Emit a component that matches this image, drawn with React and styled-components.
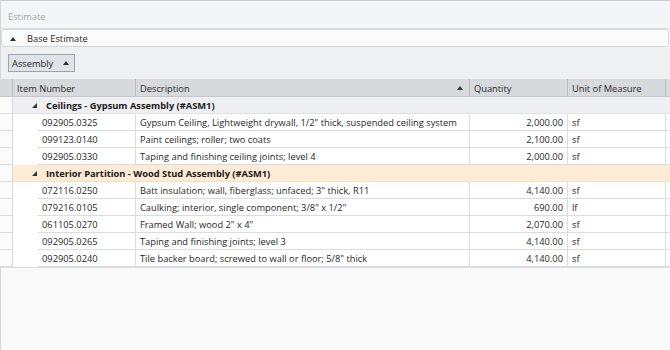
import React from "react";
import styled, { createGlobalStyle } from "styled-components";

const Global = createGlobalStyle`
  html, body { margin: 0; padding: 0; }
  body {
    width: 670px;
    height: 350px;
    overflow: hidden;
    background: #f9f9f9;
    font-family: "Open Sans", "Noto Sans", sans-serif;
    font-size: 9.3px;
    color: #1f1f1f;
  }
`;

const COLS = "13px 25px 98px 334px 98px 98px 1fr";

const Page = styled.div`
  display: flex;
  flex-direction: column;
  width: 670px;
  height: 350px;
  border-top: 1px solid #c9ccd0;
  border-left: 1px solid #d4d7da;
  box-sizing: border-box;
`;

const TitleBar = styled.div`
  height: 27px;
  flex: none;
  display: flex;
  align-items: center;
  padding: 3px 0 0 7px;
  box-sizing: border-box;
  height: 28px;
  background: #f4f5f6;
  color: #a4a7ab;
  border-bottom: 1px solid #dcdfe2;
`;

const SectionBar = styled.div`
  height: 15px;
  flex: none;
  display: flex;
  align-items: center;
  gap: 11px;
  padding: 1px 0 0 8px;
  background: #fbfbfb;
  border: 1px solid #d4d7da;
  border-radius: 3px;
  margin-right: 1px;
  color: #1f1f1f;
`;

const Caret = styled.span`
  display: inline-block;
  width: 0;
  height: 0;
  border-left: 3px solid transparent;
  border-right: 3px solid transparent;
  border-bottom: 4px solid #333;
`;

const CornerCaret = styled.span`
  display: inline-block;
  width: 0;
  height: 0;
  border-left: 5px solid transparent;
  border-bottom: 5px solid #333;
`;

const GroupPanel = styled.div`
  height: 32px;
  flex: none;
  display: flex;
  align-items: center;
  padding-left: 7px;
  background: #eef0f2;
`;

const GroupChip = styled.div`
  height: 18px;
  display: flex;
  align-items: center;
  gap: 10px;
  padding: 0 5px 0 3px;
  background: #dfe2e6;
  border: 1px solid #9fa4aa;
  box-sizing: border-box;
  color: #1f1f1f;
`;

const Grid = styled.div`
  display: grid;
  grid-template-columns: ${COLS};
  margin-left: -1px;
`;

const HeaderCell = styled.div`
  height: 18px;
  display: flex;
  align-items: center;
  justify-content: space-between;
  padding: 1px 6px 0 4px;
  background: #d7dadd;
  border-right: 1px solid #b9bdc2;
  border-bottom: 1px solid #c4c8cc;
  box-sizing: border-box;
  color: #2a2a2a;
  grid-column: ${(p) => p.$span || "auto"};
  &:last-child { border-right: none; }
`;

const Indicator = styled.div`
  height: 17px;
  background: #fbfbfb;
  border-right: 1px solid #d4d8dc;
  border-bottom: 1px solid #d9dde1;
  box-sizing: border-box;
`;

const GroupCell = styled.div`
  grid-column: 2 / -1;
  height: 17px;
  display: flex;
  align-items: center;
  gap: 9px;
  padding: 1px 0 0 19px;
  font-weight: 700;
  background: ${(p) => (p.$warm ? "#fdebd5" : "#edeff1")};
  border-bottom: 1px solid ${(p) => (p.$warm ? "#f6dfc3" : "#e0e3e6")};
  box-sizing: border-box;
  color: #1a1a1a;
`;

const Spacer = styled.div`
  height: 17px;
  background: #ffffff;
`;

const Cell = styled.div`
  height: 17px;
  display: flex;
  align-items: center;
  justify-content: ${(p) => (p.$right ? "flex-end" : "flex-start")};
  padding: 1px 4px 0;
  background: #ffffff;
  border-right: 1px solid #d9dde1;
  border-bottom: 1px solid #d9dde1;
  box-sizing: border-box;
  white-space: nowrap;
  overflow: hidden;
  color: #1f1f1f;
`;

const Tail = styled.div`
  height: 17px;
  background: #ffffff;
  border-bottom: 1px solid #d9dde1;
  box-sizing: border-box;
`;

const Empty = styled.div`
  flex: 1;
  background: #f9f9f9;
  border-top: 1px solid #d9dde1;
`;

const groups = [
  {
    title: "Ceilings - Gypsum Assembly (#ASM1)",
    warm: false,
    rows: [
      ["092905.0325", "Gypsum Ceiling, Lightweight drywall, 1/2\" thick, suspended ceiling system", "2,000.00", "sf"],
      ["099123.0140", "Paint ceilings; roller; two coats", "2,100.00", "sf"],
      ["092905.0330", "Taping and finishing ceiling joints; level 4", "2,000.00", "sf"],
    ],
  },
  {
    title: "Interior Partition - Wood Stud Assembly (#ASM1)",
    warm: true,
    rows: [
      ["072116.0250", "Batt insulation; wall, fiberglass; unfaced; 3\" thick, R11", "4,140.00", "sf"],
      ["079216.0105", "Caulking; interior, single component; 3/8\" x 1/2\"", "690.00", "lf"],
      ["061105.0270", "Framed Wall; wood 2\" x 4\"", "2,070.00", "sf"],
      ["092905.0265", "Taping and finishing joints; level 3", "4,140.00", "sf"],
      ["092905.0240", "Tile backer board; screwed to wall or floor; 5/8\" thick", "4,140.00", "sf"],
    ],
  },
];

export default function App() {
  return (
    <>
      <Global />
      <Page>
        <TitleBar>Estimate</TitleBar>
        <SectionBar>
          <Caret />
          <span>Base Estimate</span>
        </SectionBar>
        <GroupPanel>
          <GroupChip>
            <span>Assembly</span>
            <Caret />
          </GroupChip>
        </GroupPanel>
        <Grid>
          <HeaderCell />
          <HeaderCell $span="2 / 4">Item Number</HeaderCell>
          <HeaderCell>
            <span>Description</span>
            <Caret />
          </HeaderCell>
          <HeaderCell>Quantity</HeaderCell>
          <HeaderCell>Unit of Measure</HeaderCell>
          <HeaderCell />
          {groups.map((g) => (
            <React.Fragment key={g.title}>
              <Indicator />
              <GroupCell $warm={g.warm}>
                <CornerCaret />
                <span>{g.title}</span>
              </GroupCell>
              {g.rows.map((r) => (
                <React.Fragment key={r[0]}>
                  <Indicator />
                  <Spacer />
                  <Cell>{r[0]}</Cell>
                  <Cell>{r[1]}</Cell>
                  <Cell $right>{r[2]}</Cell>
                  <Cell>{r[3]}</Cell>
                  <Tail />
                </React.Fragment>
              ))}
            </React.Fragment>
          ))}
        </Grid>
        <Empty />
      </Page>
    </>
  );
}
